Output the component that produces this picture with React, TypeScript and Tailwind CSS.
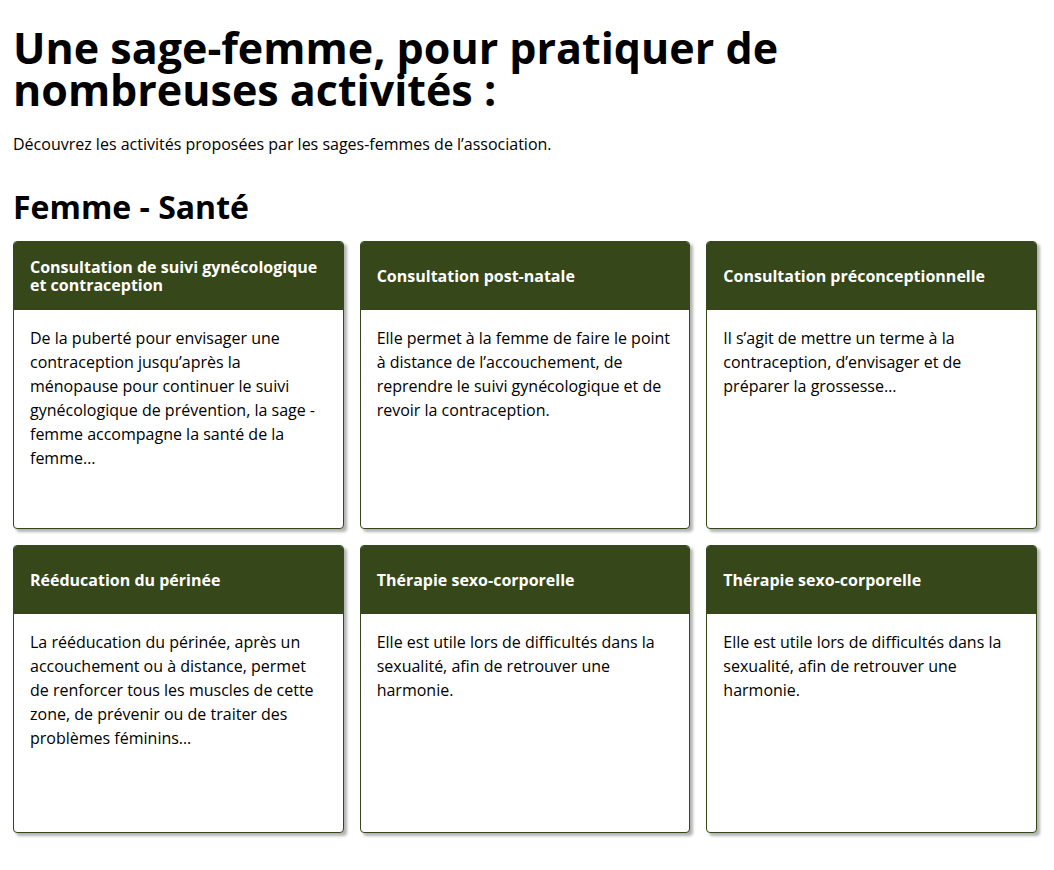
const activities = [
  {
    title: "Consultation de suivi gynécologique et contraception",
    text: "De la puberté pour envisager une contraception jusqu’après la ménopause pour continuer le suivi gynécologique de prévention, la sage -femme accompagne la santé de la femme…",
  },
  {
    title: "Consultation post-natale",
    text: "Elle permet à la femme de faire le point à distance de l’accouchement, de reprendre le suivi gynécologique et de revoir la contraception.",
  },
  {
    title: "Consultation préconceptionnelle",
    text: "Il s’agit de mettre un terme à la contraception, d’envisager et de préparer la grossesse…",
  },
  {
    title: "Rééducation du périnée",
    text: "La rééducation du périnée, après un accouchement ou à distance, permet de renforcer tous les muscles de cette zone, de prévenir ou de traiter des problèmes féminins…",
  },
  {
    title: "Thérapie sexo-corporelle",
    text: "Elle est utile lors de difficultés dans la sexualité, afin de retrouver une harmonie.",
  },
  {
    title: "Thérapie sexo-corporelle",
    text: "Elle est utile lors de difficultés dans la sexualité, afin de retrouver une harmonie.",
  },
];

function ActivityCard({ title, text }: { title: string; text: string }) {
  return (
    <article className="flex min-h-72 flex-col overflow-hidden rounded border border-[#36471a] bg-white shadow-[3px_3px_3px_rgba(0,0,0,0.3)]">
      <header className="flex min-h-17 items-center bg-[#36471a] px-4">
        <h3 className="text-base leading-[18px] font-bold text-white">{title}</h3>
      </header>
      <p className="p-4 text-base leading-6">{text}</p>
    </article>
  );
}

export default function App() {
  return (
    <main className="bg-white px-[13px] pt-[27px] pb-9 font-['Open_Sans',sans-serif] text-black">
      <h1 className="max-w-[800px] text-[43px] leading-[42px] font-bold">
        Une sage-femme, pour pratiquer de nombreuses activités :
      </h1>
      <p className="mt-[21px] text-base leading-6">
        Découvrez les activités proposées par les sages-femmes de l’association.
      </p>
      <section className="mt-[35px]">
        <h2 className="text-[32px] leading-8 font-bold">Femme - Santé</h2>
        <div className="mt-[18px] mr-1 grid grid-cols-3 gap-4">
          {activities.map((activity, index) => (
            <ActivityCard key={index} {...activity} />
          ))}
        </div>
      </section>
    </main>
  );
}
